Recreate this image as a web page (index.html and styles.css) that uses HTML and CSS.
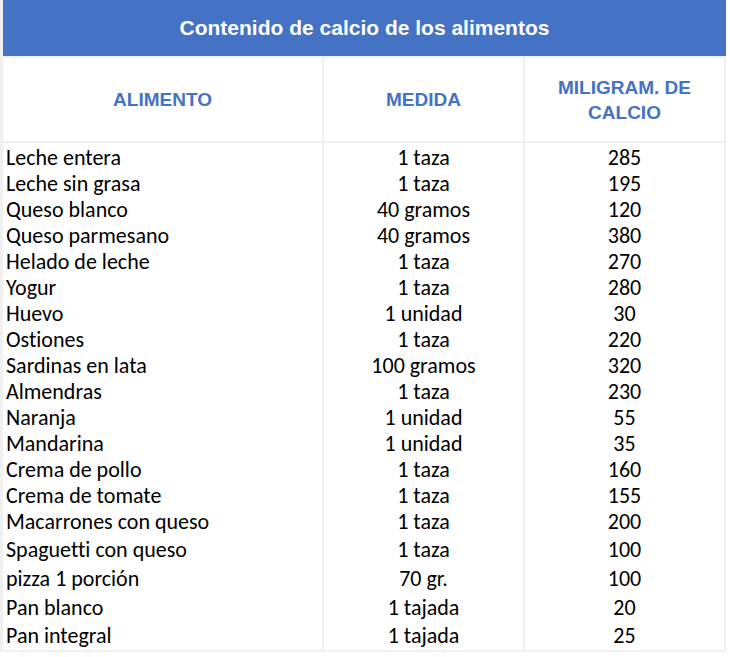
FILE: index.html
```html
<!DOCTYPE html>
<html lang="es">
<head>
<meta charset="utf-8">
<title>Contenido de calcio de los alimentos</title>
<link rel="stylesheet" href="styles.css">
</head>
<body>
<div class="sheet">
  <div class="title">Contenido de calcio de los alimentos</div>
  <div class="grid">
    <div class="head">ALIMENTO</div>
    <div class="head">MEDIDA</div>
    <div class="head">MILIGRAM. DE<br>CALCIO</div>

    <div class="c1 first">Leche entera</div><div class="c2 first">1 taza</div><div class="c3 first">285</div>
    <div class="c1">Leche sin grasa</div><div class="c2">1 taza</div><div class="c3">195</div>
    <div class="c1">Queso blanco</div><div class="c2">40 gramos</div><div class="c3">120</div>
    <div class="c1">Queso parmesano</div><div class="c2">40 gramos</div><div class="c3">380</div>
    <div class="c1">Helado de leche</div><div class="c2">1 taza</div><div class="c3">270</div>
    <div class="c1">Yogur</div><div class="c2">1 taza</div><div class="c3">280</div>
    <div class="c1">Huevo</div><div class="c2">1 unidad</div><div class="c3">30</div>
    <div class="c1">Ostiones</div><div class="c2">1 taza</div><div class="c3">220</div>
    <div class="c1">Sardinas en lata</div><div class="c2">100 gramos</div><div class="c3">320</div>
    <div class="c1">Almendras</div><div class="c2">1 taza</div><div class="c3">230</div>
    <div class="c1">Naranja</div><div class="c2">1 unidad</div><div class="c3">55</div>
    <div class="c1">Mandarina</div><div class="c2">1 unidad</div><div class="c3">35</div>
    <div class="c1">Crema de pollo</div><div class="c2">1 taza</div><div class="c3">160</div>
    <div class="c1">Crema de tomate</div><div class="c2">1 taza</div><div class="c3">155</div>
    <div class="c1">Macarrones con queso</div><div class="c2">1 taza</div><div class="c3">200</div>
    <div class="c1 tall">Spaguetti con queso</div><div class="c2 tall">1 taza</div><div class="c3 tall">100</div>
    <div class="c1 tall">pizza 1 porción</div><div class="c2 tall">70 gr.</div><div class="c3 tall">100</div>
    <div class="c1 tall">Pan blanco</div><div class="c2 tall">1 tajada</div><div class="c3 tall">20</div>
    <div class="c1 tall last">Pan integral</div><div class="c2 tall last">1 tajada</div><div class="c3 tall last">25</div>
  </div>
</div>
</body>
</html>
```
FILE: styles.css
```css
html, body {
  margin: 0;
  padding: 0;
  background: #ffffff;
}

.sheet {
  width: 723px;
  border-left: 3px solid #f0f0f0;
}

.title {
  height: 56px;
  background: #4472c4;
  color: #ffffff;
  font-family: "Liberation Sans", Arial, sans-serif;
  font-weight: bold;
  font-size: 21px;
  display: flex;
  align-items: center;
  justify-content: center;
}

.grid {
  display: grid;
  grid-template-columns: 319px 199px 199px;
  column-gap: 2px;
  row-gap: 0;
  padding: 2px 2px 2px 0;
  background: #f0f0f0;
}

.grid > div {
  background: #ffffff;
}

.head {
  height: 83px;
  margin-bottom: 2px;
  display: flex;
  align-items: center;
  justify-content: center;
  text-align: center;
  color: #4472c4;
  font-family: "Liberation Sans", Arial, sans-serif;
  font-weight: bold;
  font-size: 19px;
  line-height: 25px;
}

.c1, .c2, .c3 {
  height: 26px;
  line-height: 26px;
  font-family: Carlito, Calibri, Lato, sans-serif;
  font-size: 22px;
  font-variant-ligatures: none;
  color: #000000;
  white-space: nowrap;
}

.c1 {
  padding-left: 3px;
}

.c2, .c3 {
  text-align: center;
}

.first {
  padding-top: 2px;
}

.tall {
  height: 29px;
  line-height: 29px;
}

.last {
  height: 28px;
  line-height: 28px;
}
```
